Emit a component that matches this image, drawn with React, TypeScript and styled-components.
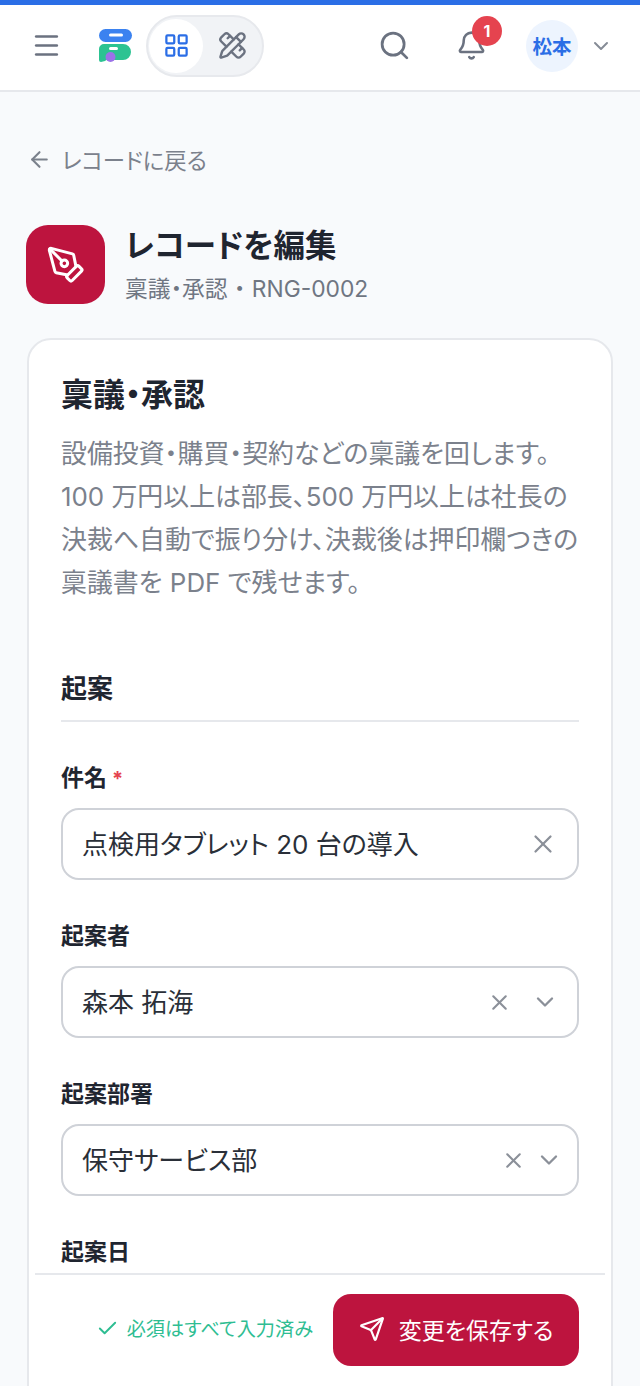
import styled, { createGlobalStyle } from 'styled-components';
import { ArrowLeft, Bell, Check, ChevronDown, LayoutGrid, Menu, PencilRuler, PenTool, Search, Send, X } from 'lucide-react';

const GlobalStyle = createGlobalStyle`
  html, body {
    margin: 0;
    padding: 0;
    height: 1386px;
    overflow: hidden;
    background: #f8fafc;
  }
  * { box-sizing: border-box; }
  body {
    font-family: Inter, "Noto Sans CJK JP", sans-serif;
    font-feature-settings: "palt";
    color: #1f2530;
  }
`;

const Page = styled.div`
  position: relative;
  width: 640px;
  height: 1386px;
  overflow: hidden;
  border-top: 5px solid #2b6ee6;
`;

const Header = styled.header`
  height: 87px;
  background: #fff;
  border-bottom: 2px solid #e6e8ec;
  display: flex;
  align-items: center;
  padding: 0 27px 4px 31px;
`;

const IconButton = styled.span`
  display: flex;
  color: #6b7280;
`;

const Logo = styled.svg`
  margin-left: 37px;
  flex: none;
`;

const Toggle = styled.div`
  width: 118px;
  height: 62px;
  margin-left: 13px;
  border-radius: 31px;
  background: #f1f3f6;
  border: 2px solid #e7e9ed;
  display: flex;
  align-items: center;
  padding-left: 1px;
`;

const ToggleKnob = styled.span`
  width: 54px;
  height: 54px;
  border-radius: 50%;
  background: #fff;
  color: #2b6ee6;
  display: flex;
  align-items: center;
  justify-content: center;
`;

const ToggleOff = styled.span`
  width: 58px;
  display: flex;
  justify-content: center;
  color: #6b7280;
`;

const HeaderRight = styled.div`
  margin-left: auto;
  display: flex;
  align-items: center;
`;

const BellWrap = styled.span`
  position: relative;
  display: flex;
  color: #6b7280;
  margin-left: 45px;
`;

const Badge = styled.span`
  position: absolute;
  top: -14px;
  left: 16px;
  width: 30px;
  height: 30px;
  border-radius: 50%;
  background: #e5434f;
  color: #fff;
  font-size: 16px;
  font-weight: 700;
  display: flex;
  align-items: center;
  justify-content: center;
`;

const Avatar = styled.span`
  width: 52px;
  height: 52px;
  margin-left: 39px;
  border-radius: 50%;
  background: #edf4fe;
  color: #2b6ee6;
  font-size: 19.500px;
  font-weight: 700;
  display: flex;
  align-items: center;
  justify-content: center;
`;

const AvatarChevron = styled.span`
  display: flex;
  margin-left: 11px;
  color: #868c96;
`;

const Main = styled.main`
  padding: 0 27px;
`;

const BackLink = styled.a`
  display: flex;
  align-items: center;
  gap: 10px;
  height: 30px;
  margin-top: 52px;
  color: #7b818c;
  font-size: 22.400px;
`;

const TitleRow = styled.div`
  display: flex;
  align-items: center;
  gap: 20px;
  margin: 51px 0 0 -1px;
`;

const TitleIcon = styled.div`
  width: 79px;
  height: 79px;
  border-radius: 22px;
  background: #bd143e;
  color: #fff;
  display: flex;
  align-items: center;
  justify-content: center;
`;

const TitleText = styled.div`
  display: flex;
  flex-direction: column;
  gap: 9px;
  padding-top: 2px;
`;

const Title = styled.h1`
  margin: 0;
  font-size: 31.500px;
  line-height: 38px;
  font-weight: 700;
  color: #1f2530;
`;

const Subtitle = styled.div`
  font-size: 22.800px;
  line-height: 30px;
  color: #6f7682;
`;

const Card = styled.section`
  margin-top: 34px;
  background: #fff;
  border: 2px solid #e6e8ec;
  border-radius: 24px;
  padding: 35px 32px;
  height: 1100px;
`;

const CardTitle = styled.h2`
  margin: 0;
  font-size: 32px;
  line-height: 40px;
  font-weight: 700;
`;

const Description = styled.p`
  margin: 17px 0 0;
  font-size: 25.900px;
  line-height: 43px;
  color: #7b818c;
  white-space: nowrap;
`;

const SectionHeading = styled.h3`
  margin: 68px 0 0;
  padding-bottom: 14px;
  font-size: 26px;
  line-height: 34px;
  font-weight: 700;
  border-bottom: 2px solid #e6e8ec;
`;

const Field = styled.div`
  margin-top: 41px;
`;

const Label = styled.label`
  display: block;
  font-size: 23px;
  line-height: 30px;
  font-weight: 700;
  color: #1f2530;
  margin-bottom: 15px;
`;

const Required = styled.span`
  color: #e5434f;
  margin-left: 5px;
  font-size: 20px;
  line-height: 0;
`;

const InputBox = styled.div<{ $padRight: number }>`
  height: 72px;
  border: 2px solid #cfd2d8;
  border-radius: 18px;
  display: flex;
  align-items: center;
  padding: 0 ${p => p.$padRight}px 0 19px;
  font-size: 26px;
  color: #2a2f38;
`;

const Value = styled.span`
  flex: 1;
  padding-bottom: 4px;
`;

const Clear = styled.span`
  display: flex;
  color: #8b9099;
`;

const Caret = styled.span<{ $gap: number }>`
  display: flex;
  color: #8b9099;
  margin-left: ${p => p.$gap}px;
`;

const Footer = styled.div`
  position: absolute;
  left: 35px;
  right: 35px;
  bottom: 0;
  height: 113px;
  background: #fff;
  border-top: 2px solid #e6e8ec;
  display: flex;
  align-items: flex-start;
  justify-content: flex-end;
  padding: 19px 26px 0 0;
`;

const Status = styled.span`
  display: flex;
  align-items: center;
  gap: 8px;
  height: 68px;
  margin-right: 20px;
  color: #2ebd92;
  font-size: 19.200px;
`;

const SaveButton = styled.button`
  width: 246px;
  height: 72px;
  border: 0;
  border-radius: 18px;
  background: #bd143e;
  color: #fff;
  font: inherit;
  font-size: 23px;
  display: flex;
  align-items: center;
  justify-content: center;
  gap: 14px;
  padding: 0 0 2px;
`;

const selects = [
  { label: '起案者', value: '森本 拓海', padRight: 18, gap: 19 },
  { label: '起案部署', value: '保守サービス部', padRight: 14, gap: 9 },
];

export default function App() {
  return (
    <>
      <GlobalStyle />
      <Page>
        <Header>
          <IconButton><Menu size={31} strokeWidth={2} /></IconButton>
          <Logo width="34" height="34" viewBox="0 0 34 34">
            <rect x="0" y="0" width="33" height="13" rx="6.500" fill="#3b82f0" />
            <rect x="10" y="4.500" width="14" height="3" rx="1.500" fill="#fff" />
            <path d="M0 20a5 5 0 0 1 5-5h19a8 8 0 0 1 0 16H14a6 6 0 0 0-8 1l-4 1a2 2 0 0 1-2-2z" fill="#2cc392" />
            <rect x="10" y="18" width="9" height="3" rx="1.500" fill="#fff" />
            <circle cx="11.500" cy="28" r="5" fill="#9b72e8" />
          </Logo>
          <Toggle>
            <ToggleKnob><LayoutGrid size={27} strokeWidth={2} /></ToggleKnob>
            <ToggleOff><PencilRuler size={29} strokeWidth={2} /></ToggleOff>
          </Toggle>
          <HeaderRight>
            <IconButton><Search size={33} strokeWidth={2} /></IconButton>
            <BellWrap>
              <Bell size={31} strokeWidth={2} />
              <Badge>1</Badge>
            </BellWrap>
            <Avatar>松本</Avatar>
            <AvatarChevron><ChevronDown size={24} strokeWidth={2} /></AvatarChevron>
          </HeaderRight>
        </Header>
        <Main>
          <BackLink><ArrowLeft size={25} strokeWidth={2} />レコードに戻る</BackLink>
          <TitleRow>
            <TitleIcon><PenTool size={40} strokeWidth={1.800} /></TitleIcon>
            <TitleText>
              <Title>レコードを編集</Title>
              <Subtitle>稟議・承認 ・ RNG-0002</Subtitle>
            </TitleText>
          </TitleRow>
          <Card>
            <CardTitle>稟議・承認</CardTitle>
            <Description>
              設備投資・購買・契約などの稟議を回します。<br />
              100 万円以上は部長、500 万円以上は社長の<br />
              決裁へ自動で振り分け、決裁後は押印欄つきの<br />
              稟議書を PDF で残せます。
            </Description>
            <SectionHeading>起案</SectionHeading>
            <Field>
              <Label>件名<Required>*</Required></Label>
              <InputBox $padRight={19}>
                <Value>点検用タブレット 20 台の導入</Value>
                <Clear><X size={30} strokeWidth={1.800} /></Clear>
              </InputBox>
            </Field>
            {selects.map(s => (
              <Field key={s.label}>
                <Label>{s.label}</Label>
                <InputBox $padRight={s.padRight}>
                  <Value>{s.value}</Value>
                  <Clear><X size={25} strokeWidth={2} /></Clear>
                  <Caret $gap={s.gap}><ChevronDown size={28} strokeWidth={2} /></Caret>
                </InputBox>
              </Field>
            ))}
            <Field>
              <Label>起案日</Label>
            </Field>
          </Card>
        </Main>
        <Footer>
          <Status><Check size={23} strokeWidth={2} />必須はすべて入力済み</Status>
          <SaveButton><Send size={26} strokeWidth={2} />変更を保存する</SaveButton>
        </Footer>
      </Page>
    </>
  );
}
